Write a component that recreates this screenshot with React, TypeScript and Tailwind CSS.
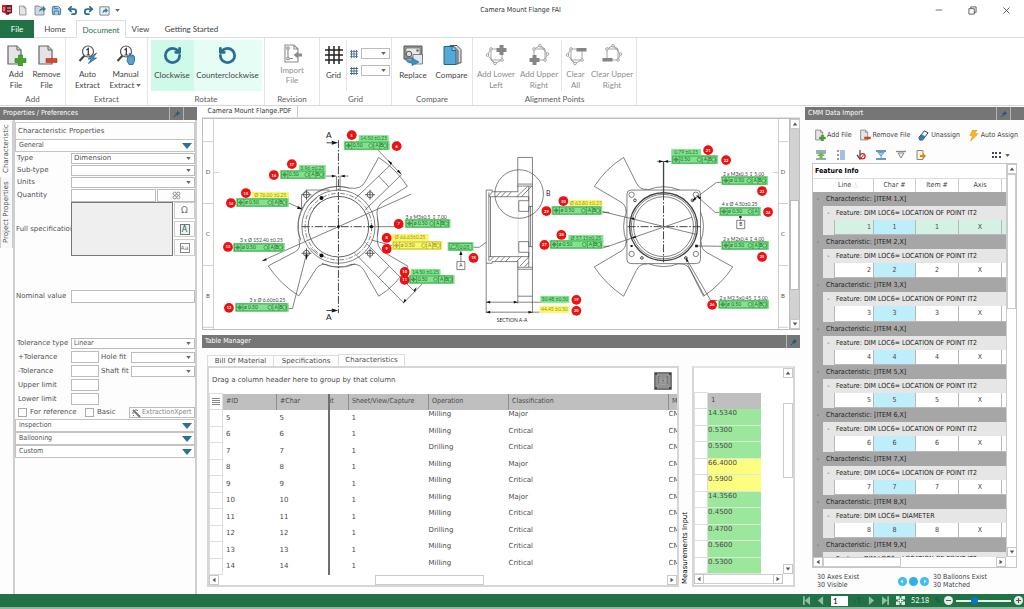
import React from 'react';
import { RotateCcw, RotateCw, Undo2, Redo2, Save, Minus, X, Plus } from 'lucide-react';

type Tone = 'green' | 'yellow' | 'none';

/* ---------- small shared pieces ---------- */

const Caret: React.FC<{ className?: string }> = ({ className = '' }) => (
  <svg viewBox="0 0 6 4" className={`w-[5px] h-[3px] ${className}`}>
    <path d="M0 0h6L3 4z" fill="#666" />
  </svg>
);

const Pin: React.FC = () => (
  <svg viewBox="0 0 10 10" className="w-2 h-2">
    <path d="M5.5 1 9 4.5 7 5 5.5 7.5 2.5 4.5 5 3z" fill="#1d5c84" />
    <path d="M4 6 1 9" stroke="#1d5c84" strokeWidth="1.2" />
  </svg>
);

const PanelHeader: React.FC<{ title: string; closable?: boolean }> = ({ title, closable = true }) => (
  <div className="flex h-[13px] shrink-0 items-stretch bg-[#767676] text-white">
    <h2 className="flex-1 truncate pl-[3px] font-[DejaVu_Sans_Condensed,sans-serif] text-[7px] leading-[13px]">{title}</h2>
    <button type="button" aria-label={`Pin ${title}`} className="flex w-[14px] items-center justify-center border-l border-[#b5b5b5]">
      <Pin />
    </button>
    {closable && <button type="button" aria-label={`Close ${title}`} className="w-[14px] border-l border-[#b5b5b5]" />}
  </div>
);

const ScrollArrow: React.FC<{ dir: 'up' | 'down' | 'left' | 'right' }> = ({ dir }) => {
  const paths = { up: 'M1 6 4 2l3 4z', down: 'M1 2h6L4 6z', left: 'M6 1v6L2 4z', right: 'M2 1v6l4-3z' };
  return (
    <button type="button" aria-label={`Scroll ${dir}`} className="flex h-[10px] w-[10px] shrink-0 items-center justify-center border border-[#c8c8c8] bg-white">
      <svg viewBox="0 0 8 8" className="h-[6px] w-[6px]">
        <path d={paths[dir]} fill="#555" />
      </svg>
    </button>
  );
};

const SelectBox: React.FC<{ id: string; label?: string; value?: string; className?: string }> = ({ id, label, value = '', className = '' }) => (
  <span className={`relative flex h-[11px] items-center border border-[#bcbcbc] bg-white ${className}`}>
    <select id={id} aria-label={label} defaultValue={value} className="h-full w-full appearance-none bg-transparent pl-[2px] leading-none outline-none">
      <option value={value}>{value}</option>
    </select>
    <Caret className="pointer-events-none absolute right-[3px]" />
  </span>
);

/* ---------- icons ---------- */

const Page: React.FC<{ children?: React.ReactNode; className?: string }> = ({ children, className = 'h-[22px] w-[22px]' }) => (
  <svg viewBox="0 0 22 22" className={className}>
    <path d="M3 2h9l4 4v14H3z" fill="#e4e4e4" stroke="#666" strokeWidth="1.2" />
    <path d="M12 2v4h4" fill="#cfcfcf" stroke="#666" />
    {children}
  </svg>
);

const AddFileIcon: React.FC<{ className?: string }> = ({ className }) => (
  <Page className={className}>
    <path d="M13.5 11h4v3.500H21v4h-3.500V22h-4v-3.500H10v-4h3.500z" fill="#43a52c" stroke="#2a7a1a" strokeWidth=".6" />
  </Page>
);

const RemoveFileIcon: React.FC<{ className?: string }> = ({ className }) => (
  <Page className={className}>
    <path d="M10 14.5h11v4H10z" fill="#d8482c" stroke="#b03018" strokeWidth=".6" />
  </Page>
);

const ExtractIcon: React.FC<{ manual?: boolean }> = ({ manual }) => (
  <svg viewBox="0 0 22 22" className="h-[22px] w-[22px]">
    <path d="M7.5 11.5 2.5 17" stroke="#444" strokeWidth="2" />
    <circle cx="11" cy="7.5" r="5.5" fill="#fff" stroke="#555" strokeWidth="1.2" />
    <path d="M9.5 6 11.3 4.5V11M9.5 11h3.6" fill="none" stroke="#333" strokeWidth="1.2" />
    {manual ? (
      <path d="M13 12h1.300V9.500h1.500V12h1.200v-1h1.300v1.500h1.200V17l-1.500 3.500h-4L12 17z" fill="#5b9fc6" stroke="#22648c" strokeWidth=".8" />
    ) : (
      <path d="m19.5 9-8.500 6h3.500l-3 4.500 8-5.500H16z" fill="#4a90bd" stroke="#22648c" strokeWidth=".8" />
    )}
  </svg>
);

const ImportIcon: React.FC = () => (
  <svg viewBox="0 0 22 22" className="h-[22px] w-[22px]" fill="none" stroke="#8c8c8c" strokeWidth="1.1">
    <path d="M4 3h9l4 4v13H4zM13 3v4h4" />
    <circle cx="7" cy="6" r="1.3" />
    <circle cx="7" cy="16.5" r="1.3" />
    <path d="M7 7.5V15M8.5 16.5H12" />
    <path d="M21 11.5h-4V9.500l-4.500 3.500 4.500 3.500v-2h4z" fill="#8c8c8c" stroke="none" />
  </svg>
);

const GridIcon: React.FC = () => (
  <svg viewBox="0 0 20 20" className="h-[20px] w-[20px]" stroke="#222" strokeWidth="1.5">
    <path d="M5 1v18M10 1v18M15 1v18M1 5h18M1 10h18M1 15h18" />
  </svg>
);

const SpacingIcon: React.FC<{ vertical?: boolean }> = ({ vertical }) => (
  <svg viewBox="0 0 8 8" className="h-[8px] w-[8px]">
    <path d="M1.5 0v8M4 0v8M6.5 0v8" stroke={vertical ? '#2f8fc4' : '#555'} strokeWidth=".9" />
    <path d="M0 1.500h8M0 4h8M0 6.500h8" stroke={vertical ? '#555' : '#2f8fc4'} strokeWidth=".9" />
  </svg>
);

const ReplaceIcon: React.FC = () => (
  <svg viewBox="0 0 22 22" className="h-[22px] w-[22px]">
    <path d="M2 2h18v13H2z" fill="#9a9a9a" stroke="#555" />
    <path d="M4 4h14v9H4z" fill="#e9e9e9" stroke="#666" strokeWidth=".7" />
    <circle cx="15.5" cy="6.5" r="1.2" fill="#666" />
    <circle cx="7" cy="10" r="2.8" fill="#ddd" stroke="#555" />
    <path d="M11 10.5h9.500v9.500H11z" fill="#dfe8ee" stroke="#666" strokeWidth=".8" />
    <path d="M3 14c2 2.500 4 3 7 2.500V14l7 4-7 3.500V19c-3 .5-6-1-7-5z" fill="#3d8fc0" stroke="#1f6a97" strokeWidth=".6" />
  </svg>
);

const CompareIcon: React.FC = () => (
  <svg viewBox="0 0 22 22" className="h-[22px] w-[22px]">
    <path d="M9 1.500h7l4 4V19H9z" fill="#ddd" stroke="#555" />
    <path d="M6 2.500h7l4 4V20H6z" fill="#bbb" stroke="#555" />
    <path d="M3 2.500h8l4 4v14H3z" fill="#54a9d6" stroke="#22648c" />
    <path d="M11 2.500v4h4" fill="#9cd0ea" stroke="#22648c" />
  </svg>
);

const AlignIcon: React.FC<{ mark: 'plus' | 'minus'; lower?: boolean }> = ({ mark, lower }) => (
  <svg viewBox="0 0 22 22" className="h-[22px] w-[22px]">
    <g fill="none" stroke="#9a9a9a" strokeWidth=".9">
      <path d="M6 5h11v11H6z" />
      <path d={lower ? 'M6 5 12 1.500 19.500 10 17 16M12 1.500 17 5' : 'M6 5 2.500 11 10 19.500 17 16M6 16l4 3.500'} />
      <circle cx="6" cy="5" r="1.3" fill="#fff" />
      <circle cx="17" cy="16" r="1.3" fill="#fff" />
      <circle cx={lower ? 12 : 2.5} cy={lower ? 1.8 : 11} r="1.3" fill="#fff" />
      <circle cx={lower ? 19.5 : 10} cy={lower ? 10 : 19.5} r="1.3" fill="#fff" />
    </g>
    <g transform={lower ? 'translate(-10 10)' : 'translate(0 0)'}>
      {mark === 'plus' ? <path d="M14.500 1h4v3h3v4h-3v3h-4V8h-3V4h3z" fill="#858585" /> : <path d="M11.500 4h10v3.500h-10z" fill="#858585" />}
    </g>
  </svg>
);

const Wand: React.FC = () => (
  <svg viewBox="0 0 10 10" className="h-[10px] w-[10px]" stroke="#777">
    <path d="m2 2 7 7" strokeWidth="2" />
    <path d="M5 1v2M1 5h2M7 2 6 3M2 8l1-1" strokeWidth="1" />
  </svg>
);

/* ---------- title bar and ribbon ---------- */

const TitleBar: React.FC = () => (
  <header className="flex h-5 items-center bg-white">
    <div className="flex flex-1 items-center gap-[5px] pl-[1px]">
      <svg viewBox="0 0 12 12" className="h-[12px] w-[12px]">
        <path d="M1 1h7v10L1 8z" fill="#c0202c" />
        <path d="M5 1h6v8l-6 2z" fill="#7c1620" />
        <path d="M2 4h2M2 6h2M6 4h4M6 7h4" stroke="#fff" strokeWidth=".8" />
      </svg>
      <button type="button" aria-label="New"><Page className="h-[11px] w-[11px]" /></button>
      <button type="button" aria-label="Open">
        <svg viewBox="0 0 12 12" className="h-[12px] w-[12px]">
          <path d="M1 2h4l1 1h4v8H1z" fill="#cfd8de" stroke="#6d7f8b" strokeWidth=".8" />
          <path d="M5 8c0-3 2-4 4-4V2l3 3-3 3V6C7 6 6 7 5 8z" fill="#3c7fa6" />
        </svg>
      </button>
      <button type="button" aria-label="Save"><Save className="h-[11px] w-[11px] fill-[#a9cfe4] text-[#3b6f8f]" strokeWidth={2} /></button>
      <button type="button" aria-label="Undo"><Undo2 className="h-[11px] w-[11px] text-[#2f6f98]" strokeWidth={4} /></button>
      <button type="button" aria-label="Redo"><Redo2 className="h-[11px] w-[11px] text-[#2f6f98]" strokeWidth={4} /></button>
      <button type="button" aria-label="Export">
        <svg viewBox="0 0 12 12" className="h-[11px] w-[11px]">
          <path d="M1 2h10v9H1z" fill="#eef2f4" stroke="#6d7f8b" />
          <path d="M4 9c0-3 1-4 3-4V3l3 3-3 3V7C6 7 5 8 4 9z" fill="#3c7fa6" />
        </svg>
      </button>
      <button type="button" aria-label="Customize toolbar"><Caret /></button>
    </div>
    <h1 className="pl-7 font-[DejaVu_Sans_Condensed,sans-serif] text-[7px] text-[#333]">Camera Mount Flange FAI</h1>
    <div className="flex flex-1 items-center justify-end gap-6 pr-3 text-[#555]">
      <button type="button" aria-label="Minimize"><Minus className="h-[10px] w-[10px]" strokeWidth={2} /></button>
      <button type="button" aria-label="Restore">
        <svg viewBox="0 0 10 10" className="h-[9px] w-[9px]" fill="none" stroke="#555"><path d="M1 3h6v6H1zM3 3V1h6v6H7" /></svg>
      </button>
      <button type="button" aria-label="Close"><X className="h-[11px] w-[11px]" strokeWidth={2} /></button>
    </div>
  </header>
);

const MenuTabs: React.FC = () => (
  <nav className="flex h-[18px] items-stretch border-b border-[#dcdfe2] bg-white text-[8px] text-[#444]">
    <button type="button" className="mb-[-1px] w-[34px] bg-[#217346] text-white">File</button>
    <button type="button" className="w-[42px]">Home</button>
    <button type="button" className="mb-[-1px] w-[50px] border-x border-t border-[#dcdfe2] bg-white text-[#217346]">Document</button>
    <button type="button" className="w-[29px]">View</button>
    <button type="button" className="ml-[6px] w-[61px]">Getting Started</button>
  </nav>
);

type RibbonButtonProps = {
  icon: React.ReactNode;
  lines: string[];
  className?: string;
  caret?: boolean;
  disabled?: boolean;
  tight?: boolean;
};

const RibbonButton: React.FC<RibbonButtonProps> = ({ icon, lines, className = '', caret, disabled, tight }) => (
  <button
    type="button"
    disabled={disabled}
    className={`flex h-[51px] flex-col items-center text-center ${tight ? 'pt-px leading-[10px]' : 'gap-[3px] pt-[3px] leading-[11px]'} ${disabled ? 'text-[#8d8d8d]' : 'text-[#444]'} ${className}`}
  >
    <span className="flex h-[24px] items-center justify-center">{icon}</span>
    <span>
      {lines.map((line, i) => (
        <span key={line} className="flex items-center justify-center gap-[2px] whitespace-nowrap">
          {line}
          {caret && i === lines.length - 1 && <Caret />}
        </span>
      ))}
    </span>
  </button>
);

const RibbonGroup: React.FC<{ label: string; className: string; children: React.ReactNode }> = ({ label, className, children }) => (
  <section className={`flex shrink-0 flex-col border-r border-[#e2e4e6] pt-[2px] ${className}`}>
    <div className="flex justify-center">{children}</div>
    <h3 className="mt-auto text-center leading-[11px] text-[#5c5c5c]">{label}</h3>
  </section>
);

const Ribbon: React.FC = () => (
  <div className="flex h-[68px] border-b border-[#d6d9dc] bg-white text-[8px]">
    <RibbonGroup label="Add" className="w-[66px]">
      <RibbonButton icon={<AddFileIcon />} lines={['Add', 'File']} className="w-[28px]" />
      <RibbonButton icon={<RemoveFileIcon />} lines={['Remove', 'File']} className="w-[33px]" />
    </RibbonGroup>
    <RibbonGroup label="Extract" className="w-[82px]">
      <RibbonButton icon={<ExtractIcon />} lines={['Auto', 'Extract']} className="w-[38px]" />
      <RibbonButton icon={<ExtractIcon manual />} lines={['Manual', 'Extract']} caret className="w-[38px]" />
    </RibbonGroup>
    <RibbonGroup label="Rotate" className="w-[117px]">
      <RibbonButton icon={<RotateCw className="h-[19px] w-[19px] text-[#2a6f97]" strokeWidth={3.5} />} lines={['Clockwise']} className="w-[43px] bg-[#cff9e8]" />
      <RibbonButton icon={<RotateCcw className="h-[19px] w-[19px] text-[#2a6f97]" strokeWidth={3.5} />} lines={['Counterclockwise']} className="w-[68px] bg-[#e6fdf5]" />
    </RibbonGroup>
    <RibbonGroup label="Revision" className="w-[55px]">
      <RibbonButton icon={<ImportIcon />} lines={['Import', 'File']} disabled tight className="w-[40px]" />
    </RibbonGroup>
    <RibbonGroup label="Grid" className="w-[72px]">
      <RibbonButton icon={<GridIcon />} lines={['Grid']} className="w-[26px] border-r border-[#e2e4e6]" />
      <div className="flex flex-col gap-[6px] pt-[8px] pl-[3px]">
        <div className="flex items-center gap-[3px]">
          <SpacingIcon />
          <SelectBox id="grid-rows" label="Grid rows" className="w-[29px]" />
        </div>
        <div className="flex items-center gap-[3px]">
          <SpacingIcon vertical />
          <SelectBox id="grid-columns" label="Grid columns" className="w-[29px]" />
        </div>
      </div>
    </RibbonGroup>
    <RibbonGroup label="Compare" className="w-[81px]">
      <RibbonButton icon={<ReplaceIcon />} lines={['Replace']} className="w-[39px]" />
      <RibbonButton icon={<CompareIcon />} lines={['Compare']} className="w-[38px]" />
    </RibbonGroup>
    <RibbonGroup label="Alignment Points" className="w-[164px]">
      <RibbonButton icon={<AlignIcon mark="plus" />} lines={['Add Lower', 'Left']} disabled className="w-[43px]" />
      <RibbonButton icon={<AlignIcon mark="plus" lower />} lines={['Add Upper', 'Right']} disabled className="w-[43px]" />
      <RibbonButton icon={<AlignIcon mark="minus" />} lines={['Clear', 'All']} disabled className="w-[29px] border-l border-[#e2e4e6]" />
      <RibbonButton icon={<AlignIcon mark="minus" lower />} lines={['Clear Upper', 'Right']} disabled className="w-[45px]" />
    </RibbonGroup>
  </div>
);

/* ---------- properties ---------- */

const Section: React.FC<{ title: string }> = ({ title }) => (
  <button type="button" className="flex h-[13px] w-full items-center justify-between border border-[#c4c4c4] bg-white pr-[2px] pl-[3px] font-[DejaVu_Sans_Condensed,sans-serif]">
    {title}
    <svg viewBox="0 0 10 6" className="h-[6px] w-[10px]">
      <path d="M0 0h10L5 6z" fill="#2a7196" />
    </svg>
  </button>
);

const FieldRow: React.FC<{ id: string; label: string; children: React.ReactNode }> = ({ id, label, children }) => (
  <div className="flex h-3 items-center">
    <label htmlFor={id} className="w-[56px] shrink-0 pl-[2px] whitespace-nowrap">{label}</label>
    {children}
  </div>
);

const textBox = 'border border-[#bcbcbc] bg-white outline-none';

const tolerances = [
  { left: '+Tolerance', right: 'Hole fit' },
  { left: '-Tolerance', right: 'Shaft fit' },
  { left: 'Upper limit', right: '' },
  { left: 'Lower limit', right: '' },
];

const PropertiesPanel: React.FC = () => (
  <aside className="flex w-[197px] shrink-0 flex-col pt-px">
    <PanelHeader title="Properties / Preferences" />
    <div className="flex min-h-0 flex-1 text-[7px] text-[#505050]">
      <div className="flex w-[13px] shrink-0 flex-col pt-px">
        <button type="button" className="h-[56px] rotate-180 border-l border-[#ccc] [writing-mode:vertical-rl]">Characteristic</button>
        <button type="button" className="h-[71px] rotate-180 border-y border-l border-[#ccc] bg-[#f8f8f8] [writing-mode:vertical-rl]">Project Properties</button>
      </div>
      <div className="min-w-0 flex-1 border-x-2 border-[#cfcfcf] pt-[2px]">
        <h3 className="h-[17px] border border-b-0 border-[#ccc] pl-[2px] leading-[17px]">Characteristic Properties</h3>
        <Section title="General" />
        <div className="flex flex-col">
          <FieldRow id="type" label="Type"><SelectBox id="type" value="Dimension" className="flex-1" /></FieldRow>
          <FieldRow id="subtype" label="Sub-type"><SelectBox id="subtype" className="flex-1" /></FieldRow>
          <FieldRow id="units" label="Units"><SelectBox id="units" className="flex-1" /></FieldRow>
          <div className="flex h-[14px] items-center">
            <label htmlFor="quantity" className="w-[56px] shrink-0 pl-[2px]">Quantity</label>
            <input id="quantity" className={`h-[13px] min-w-0 flex-1 ${textBox}`} />
            <button type="button" aria-label="Split quantity" className="ml-px flex h-[13px] w-[38px] items-center justify-center border border-[#bcbcbc]">
              <svg viewBox="0 0 10 10" className="h-[9px] w-[9px]" fill="none" stroke="#888">
                <circle cx="3" cy="3" r="1.8" />
                <circle cx="7" cy="3" r="1.8" />
                <circle cx="3" cy="7" r="1.8" />
                <circle cx="7" cy="7" r="1.8" />
              </svg>
            </button>
          </div>
          <div className="flex h-[54px]">
            <label htmlFor="spec" className="w-[56px] shrink-0 self-center overflow-hidden pl-px whitespace-nowrap">Full specification</label>
            <textarea id="spec" className="min-w-0 flex-1 resize-none border border-[#777] bg-[#efefef] outline-none" />
            <div className="ml-px flex w-[21px] flex-col gap-[2px] text-[#777]">
              <button type="button" className="flex-1 border border-[#ccc] text-[9px] leading-none">Ω</button>
              <button type="button" className="flex flex-1 items-center justify-center border border-[#ccc]">
                <span className="h-[11px] w-[10px] border border-[#777] bg-[#dff3ef] text-[8px] leading-[9px] text-[#456]">A</span>
              </button>
              <button type="button" className="flex flex-1 items-center justify-center border border-[#ccc]">
                <span className="h-[10px] w-[10px] border border-[#888] text-[6px] leading-[8px]">Aa</span>
              </button>
            </div>
          </div>
          <div className="mt-[34px] flex h-[13px] items-center">
            <label htmlFor="nominal" className="w-[56px] shrink-0 pl-px whitespace-nowrap">Nominal value</label>
            <input id="nominal" className={`h-[13px] min-w-0 flex-1 ${textBox}`} />
          </div>
          <div className="mt-[34px] flex h-[13px] items-center">
            <label htmlFor="toltype" className="w-[56px] shrink-0 pl-[2px] whitespace-nowrap">Tolerance type</label>
            <SelectBox id="toltype" value="Linear" className="flex-1 font-[DejaVu_Sans_Condensed,sans-serif]" />
          </div>
          {tolerances.map(({ left, right }) => (
            <div key={left} className="flex h-[14px] items-center">
              <label htmlFor={left} className="w-[56px] shrink-0 pl-[3px]">{left}</label>
              <input id={left} className={`h-[12px] w-[28px] ${textBox}`} />
              {right && (
                <>
                  <label htmlFor={right} className="w-[32px] shrink-0 pl-[2px] whitespace-nowrap">{right}</label>
                  <SelectBox id={right} className="flex-1" />
                </>
              )}
            </div>
          ))}
          <div className="flex h-[13px] items-center pl-[3px]">
            <input id="reference" type="checkbox" className="h-[9px] w-[9px] appearance-none border border-[#aaa] bg-white" />
            <label htmlFor="reference" className="w-[58px] pl-[3px] whitespace-nowrap">For reference</label>
            <input id="basic" type="checkbox" className="h-[9px] w-[9px] appearance-none border border-[#aaa] bg-white" />
            <label htmlFor="basic" className="pl-[3px]">Basic</label>
            <button type="button" className="ml-auto flex h-[11px] w-[66px] items-center gap-px border border-[#bbb] pl-px font-[DejaVu_Sans_Condensed,sans-serif] text-[#888]">
              <Wand />
              ExtractionXpert
            </button>
          </div>
        </div>
        <Section title="Inspection" />
        <Section title="Ballooning" />
        <Section title="Custom" />
      </div>
    </div>
  </aside>
);

/* ---------- drawing canvas ---------- */

const fills: Record<Tone, string> = { green: '#82e38c', yellow: '#f9f66a', none: 'none' };
const inks: Record<Tone, string> = { green: '#1b7a35', yellow: '#9a9430', none: '#444' };

type DimensionProps = { x: number; y: number; w: number; text: string; tone: Tone };

const Dimension: React.FC<DimensionProps> = ({ x, y, w, text, tone }) => (
  <g>
    <rect x={x} y={y} width={w} height="7" fill={fills[tone]} />
    <text x={x + w / 2} y={y + 5.3} textAnchor="middle" fontSize="5" fill={inks[tone]}>{text}</text>
  </g>
);

const Frame: React.FC<{ x: number; y: number; w: number; tone?: Tone; dia?: boolean; single?: boolean }> = ({ x, y, w, tone = 'green', dia = true, single }) => {
  const ink = tone === 'yellow' ? '#8a861c' : '#14682c';
  const end = x + w - 2;
  const cut = single ? end - 6 : end - 14;
  return (
    <g>
      <rect x={x} y={y} width={w} height="9" fill={fills[tone]} />
      <g stroke={ink} strokeWidth=".5" fill="none">
        <path d={`M${x + 1.5} ${y + 1}H${end}V${y + 8}H${x + 1.5}zM${x + 8} ${y + 1}v7M${cut} ${y + 1}v7`} />
        {!single && <path d={`M${cut + 6} ${y + 1}v7`} />}
        <circle cx={x + 4.8} cy={y + 4.5} r="1.6" />
        <path d={`M${x + 2.3} ${y + 4.5}h5M${x + 4.8} ${y + 2}v5`} />
        <circle cx={cut - 3} cy={y + 4.5} r="2" />
        {!single && <circle cx={end - 2.5} cy={y + 4.5} r="2" />}
      </g>
      <g fill={ink} fontSize="5">
        <text x={x + 9} y={y + 6.2}>{dia ? 'ø 0.50' : '0.50'}</text>
        <text x={cut + 1.5} y={y + 6.2}>A</text>
        {!single && <text x={cut + 6.3} y={y + 6.2}>B</text>}
      </g>
    </g>
  );
};

const dimensions: DimensionProps[] = [
  { x: 359, y: 135, w: 30, text: '14.50 ±0.25', tone: 'green' },
  { x: 299, y: 165, w: 27, text: '3.96 ±0.25', tone: 'green' },
  { x: 252, y: 192, w: 37, text: 'Ø 76.00 ±0.25', tone: 'yellow' },
  { x: 240, y: 237, w: 43, text: '3 x Ø 152.40 ±0.25', tone: 'none' },
  { x: 249, y: 297, w: 37, text: '3 x Ø 6.60±0.25', tone: 'none' },
  { x: 405, y: 214, w: 43, text: '3 x M3x0.5 ↧ 7.00', tone: 'none' },
  { x: 392, y: 234, w: 37, text: 'Ø 66.65±0.25', tone: 'yellow' },
  { x: 411, y: 269, w: 30, text: '14.50 ±0.25', tone: 'green' },
  { x: 541, y: 296, w: 29, text: '30.48 ±0.50', tone: 'green' },
  { x: 540, y: 306, w: 30, text: '44.45 ±0.50', tone: 'yellow' },
  { x: 570, y: 200, w: 33, text: 'Ø 63.80 ±0.25', tone: 'yellow' },
  { x: 569, y: 235, w: 35, text: 'Ø 57.15±0.25', tone: 'green' },
  { x: 672, y: 149, w: 30, text: '0.79 ±0.25', tone: 'green' },
  { x: 723, y: 171, w: 43, text: '2 x M3x0.5 ↧ 5.00', tone: 'none' },
  { x: 721, y: 201, w: 39, text: '4 x Ø 4.50±0.25', tone: 'none' },
  { x: 723, y: 236, w: 43, text: '2 x M2x0.4 ↧ 4.00', tone: 'none' },
  { x: 720, y: 295, w: 49, text: '2 x M2.5x0.45 ↧ 5.00', tone: 'none' },
];

// [number, x, y]
const balloons: [number, number, number][] = [
  [5, 352, 135], [6, 397, 146], [17, 292, 164], [16, 274, 175], [15, 246, 193], [14, 231, 203],
  [13, 228, 247], [12, 229, 308], [7, 399, 224], [8, 387, 238], [9, 387, 249], [10, 405, 272],
  [11, 405, 280], [18, 474, 258], [19, 577, 300], [20, 577, 311], [30, 564, 201], [29, 547, 211],
  [28, 562, 235], [27, 545, 245], [21, 709, 150], [22, 727, 160], [23, 763, 191], [24, 769, 212],
  [25, 763, 257], [26, 713, 305],
];

const FrontView: React.FC = () => (
  <g transform="translate(200 104) scale(.33333)" fill="none" stroke="#444" strokeWidth="2">
    <circle cx="416" cy="368" r="120" />
    <path d="M448 252q38 6 50-22l39-70q53 35 86 87l-70 44q-27 16-20 50M533 395q-4 36 20 50l72 42q-38 60-88 90l-42-74q-10-20-30-22H375q-20 0-30 20l-48 75q-58-37-92-90l82-43q18-9 10-37" fill="#fff" />
    <circle cx="416" cy="368" r="119" fill="#fff" stroke="none" />
    <path d="M302 410a120 120 0 0 1 146-158M533 341a120 120 0 0 1 0 54M466 480a120 120 0 0 1-100-2" />
    <circle cx="416" cy="368" r="110" />
    <circle cx="416" cy="368" r="100" strokeDasharray="14 5 4 5" />
    <circle cx="416" cy="368" r="91" strokeWidth="2.5" />
    <path d="M465 285 575 180M497 317 605 212M537 216l30 32M465 448l147 149M497 415l150 150M537 520l30-32M612 597l56-57" />
    <path d="M532 135l73 76" />
    <path d="M416 108v520" strokeDasharray="24 5 5 5" strokeWidth="3" />
    <path d="M306 368h222" strokeDasharray="24 5 5 5" strokeWidth="3" />
    <path d="M188 470 635 270M528 368h84M515 408l63 17M266 297l40 17M258 614h20l42-164M378 216h30M422 216h24M410 216v44M421 216v44" />
    <path d="M305 316v-42l15-16h70M330 300l22-20M340 315l20-20M332 432l22 20" />
    {[[320, 272], [511, 272], [320, 448], [511, 448]].map(([x, y]) => (
      <g key={`${x}-${y}`} strokeWidth="2.5">
        <circle cx={x} cy={y} r="9" />
        <path d={`M${x - 15} ${y}h30M${x} ${y - 15}v30`} />
      </g>
    ))}
    <g fill="#111" stroke="none">
      <circle cx="365" cy="282" r="6" />
      <circle cx="365" cy="455" r="6" />
      <circle cx="515" cy="368" r="5" />
      <circle cx="416" cy="368" r="4" />
      <path d="m396 110 19 6-19 6zM396 614l19 6-19 6zM294 306l14 10-16-1zM396 212l13 4-13 4zM435 212l-12 4 12 4zM564 168l14 9-5 5zM606 211l-14-9 5-5zM186 472l12-9 3 6zM610 599l5-14 5 5zM646 564l5-14-9 8zM317 452l3 18 4-18z" />
    </g>
    <path d="M380 116h20M380 620h20" strokeWidth="3" />
    <g fill="#222" stroke="none" fontSize="25">
      <text x="379" y="103">A</text>
      <text x="379" y="650">A</text>
    </g>
  </g>
);

const SectionView: React.FC = () => (
  <g transform="translate(430 104) scale(.33333)" fill="none" stroke="#444" strokeWidth="2">
    <path d="M265 160h44v417h-44zM265 240h44M265 246h44M265 490h44M265 496h44" />
    <path d="M265 248v240" stroke="#fff" strokeWidth="4" />
    <path d="M170 258h18v5h77v-17M170 258v220h18v-5h77v17M178 265v206M183 278v180M178 278h120v12M178 458h120v-13" />
    <path d="M298 290h-30v32h30zM298 413h-30v32h30zM298 246v44M298 445v45M298 322v-15h11M298 322v91M303 307v121M298 413v15h11" />
    <path d="m178 276 10-12M200 278l14-15M215 278l14-15M232 278l14-15M262 278l32-31M276 278l30-31M180 472l12-13M196 473l14-15M212 473l14-15M228 473l14-15M262 472l14-14M272 486l26-27M286 488l12-13" />
    <circle cx="269" cy="270" r="73" />
    <path d="M170 478v150M265 577v22M309 577v50M170 595h165M170 625h160M131 430h18l21-15M94 443v30M82 473h24v24H82zM520 325h20M522 427h18" />
    <path d="m170 595 12-4v8zM265 595l-12-4v8zM170 625l12-4v8zM309 625l-12-4v8zM94 441l-5 12h10z" fill="#111" stroke="none" />
    <g fill="#222" stroke="none">
      <text x="350" y="277" fontSize="21">B</text>
      <text x="94" y="490" fontSize="14" textAnchor="middle">A</text>
      <text x="248" y="656" fontSize="15" textAnchor="middle">SECTION A-A</text>
    </g>
  </g>
);

const RearView: React.FC = () => (
  <g transform="translate(590 104) scale(.33333)" fill="none" stroke="#444" strokeWidth="2">
    <circle cx="223" cy="368" r="120" />
    <path d="M175 256q-24 2-34-20l-38-76q-55 35-88 87l78 46q18 10 17 30M175 480q-24-2-34 20l-38 77q-55-37-88-88l78-46q18-10 17-30M270 480q24-2 34 20l39 77q55-37 88-88l-76-42q-20-10-19-34" />
    <rect x="113" y="258" width="221" height="221" rx="12" fill="#fff" />
    <circle cx="223" cy="368" r="102" strokeWidth="4" />
    <circle cx="223" cy="368" r="97" />
    <circle cx="223" cy="368" r="90" />
    <path d="M223 265v210M115 368h220" strokeDasharray="24 5 5 5" strokeWidth="3" />
    <path d="M223 172v95" strokeWidth="4" />
    <path d="M203 172h46M0 323h40l281 68M0 431h45l263-91M310 289l72-54h15M322 275l56 50h14M320 426l77 1M290 462l75 128h20M295 480l50 95" />
    {[[127, 272], [320, 272], [127, 450], [320, 450]].map(([x, y]) => <circle key={`${x}-${y}`} cx={x} cy={y} r="8" />)}
    {[[137, 289], [310, 289], [158, 462], [290, 462]].map(([x, y]) => <circle key={`${x}-${y}`} cx={x} cy={y} r="4" strokeWidth="3" />)}
    <path d="M223 172l-14-4v8zM223 172l14-4v8zM122 341l12 7 1-7zM124 403l14-7 2 6zM308 293l14-8-5-6zM322 273l14 8-6 5zM290 460l2 15 6-4zM318 422h8v8h-8zM124 423h6v6h-6z" fill="#111" stroke="none" />
    <path d="M454 333v16M443 349h24v25h-24z" />
    <path d="m454 331-5 10h10z" fill="#111" stroke="none" />
    <text x="455" y="367" fontSize="14" textAnchor="middle" fill="#222" stroke="none">B</text>
  </g>
);

const DrawingCanvas: React.FC = () => (
  <div className="flex h-[212px] shrink-0 border border-[#bdbdbd] bg-white">
    <svg viewBox="203 119 587 210" className="h-[210px] min-w-0 flex-1 font-[Lato,sans-serif]" role="img" aria-label="Camera mount flange drawing">
      <path d="M213.500 119v210M779.500 119v210M203 141.500h10M203 203.500h10M203 265.500h10M203 327.500h10M779 141.500h10M779 203.500h10M779 265.500h10M779 327.500h10M213 172.500h6M774 172.500h6" stroke="#cfcfcf" fill="none" />
      {['D', 'C', 'B'].map((letter, i) => (
        <g key={letter} fontSize="6" fill="#555" textAnchor="middle">
          <text x="208" y={174 + i * 62}>{letter}</text>
          <text x="784" y={174 + i * 62}>{letter}</text>
        </g>
      ))}
      <FrontView />
      <SectionView />
      <RearView />
      {dimensions.map((d) => <Dimension key={`${d.x}-${d.y}`} {...d} />)}
      <Frame x={344} y={141} w={46} dia={false} />
      <Frame x={280} y={170} w={46} dia={false} />
      <Frame x={236} y={198} w={53} />
      <Frame x={233} y={243} w={52} />
      <Frame x={235} y={303} w={54} />
      <Frame x={405} y={219} w={46} />
      <Frame x={392} y={241} w={51} tone="yellow" />
      <Frame x={409} y={275} w={46} dia={false} />
      <Frame x={552} y={206} w={51} />
      <Frame x={550} y={240} w={54} />
      <Frame x={672} y={155} w={47} dia={false} />
      <Frame x={722} y={176} w={47} />
      <Frame x={720} y={207} w={42} single />
      <Frame x={722} y={241} w={48} />
      <Frame x={719} y={300} w={51} />
      <g>
        <rect x="448" y="242" width="26" height="9" fill="#82e38c" />
        <path d="M449.500 243.500h23v6.500h-23zM458.500 243.500v6.500M451 248.500l1.500-3.500h5l-1.500 3.500z" fill="none" stroke="#14682c" strokeWidth=".5" />
        <text x="460" y="248.700" fontSize="5" fill="#14682c">0.05</text>
      </g>
      {balloons.map(([n, x, y]) => (
        <g key={n}>
          <circle cx={x} cy={y} r="4.9" fill="#ee1111" />
          <text x={x} y={y + 1.5} fontSize="4" fontWeight="bold" fill="#fff" textAnchor="middle">{n}</text>
        </g>
      ))}
    </svg>
    <div className="flex w-[10px] shrink-0 flex-col border-l border-[#bdbdbd] bg-[#d2d2d2]">
      <ScrollArrow dir="up" />
      <div className="flex-[72]" />
      <div className="flex-[90] border border-[#bbb] bg-white" />
      <div className="flex-[30]" />
      <ScrollArrow dir="down" />
    </div>
  </div>
);

/* ---------- table manager ---------- */

const characteristics = [
  { id: 5, operation: 'Milling', classification: 'Major', value: '14.5340', warn: false },
  { id: 6, operation: 'Milling', classification: 'Critical', value: '0.5300', warn: false },
  { id: 7, operation: 'Drilling', classification: 'Critical', value: '0.5500', warn: false },
  { id: 8, operation: 'Milling', classification: 'Major', value: '66.4000', warn: true },
  { id: 9, operation: 'Milling', classification: 'Critical', value: '0.5900', warn: true },
  { id: 10, operation: 'Milling', classification: 'Major', value: '14.3560', warn: false },
  { id: 11, operation: 'Milling', classification: 'Critical', value: '0.4500', warn: false },
  { id: 12, operation: 'Drilling', classification: 'Critical', value: '0.4700', warn: false },
  { id: 13, operation: 'Milling', classification: 'Critical', value: '0.5600', warn: false },
  { id: 14, operation: 'Milling', classification: 'Critical', value: '0.5300', warn: false },
];

const headCell = 'overflow-hidden border-r border-[#8e8e8e] bg-[#bfbfbf] pl-[3px] text-left font-normal whitespace-nowrap';

const CharacteristicsTable: React.FC = () => (
  <div className="flex min-w-0 flex-1 flex-col overflow-hidden border-2 border-[#d6d6d6] bg-white">
    <div className="flex h-[25px] items-center justify-between pr-[5px] pl-[3px]">
      <span>Drag a column header here to group by that column</span>
      <button type="button" aria-label="Show part">
        <svg viewBox="0 0 18 18" className="h-[18px] w-[18px]">
          <rect width="18" height="18" rx="1" fill="#777" />
          <path d="M3 3h12v12H3zM6 5h6v7H6zM7 7h4v3H7zM4 13h10" fill="none" stroke="#bbb" strokeWidth=".8" />
          <path d="M1 1h2v2H1zM15 1h2v2h-2zM1 15h2v2H1zM15 15h2v2h-2z" fill="#444" />
        </svg>
      </button>
    </div>
    <table className="w-full table-fixed border-collapse">
      <colgroup>
        <col className="w-[13px]" />
        <col className="w-[54px]" />
        <col className="w-[52px]" />
        <col className="w-[20px]" />
        <col className="w-[80px]" />
        <col className="w-[80px]" />
        <col className="w-[160px]" />
        <col />
      </colgroup>
      <thead>
        <tr className="h-[16px] font-[DejaVu_Sans_Condensed,sans-serif]">
          <th className="border border-[#ddd]">
            <svg viewBox="0 0 8 8" className="m-auto h-[8px] w-[8px]" stroke="#888"><path d="M0 .5h8M0 2.500h8M0 4.500h8M0 6.500h8" /></svg>
          </th>
          <th className={headCell}>#ID</th>
          <th className="overflow-hidden border-r-2 border-[#6d7072] bg-[#bfbfbf] pl-[3px] text-left font-normal">#Char</th>
          <th className="overflow-hidden border-r border-[#8e8e8e] bg-[#bfbfbf] text-left font-normal">it</th>
          <th className={headCell}>Sheet/View/Capture</th>
          <th className={headCell}>Operation</th>
          <th className={headCell}>Classification</th>
          <th className="overflow-hidden bg-[#bfbfbf] pl-[3px] text-left font-normal whitespace-nowrap">M</th>
        </tr>
      </thead>
      <tbody>
        {characteristics.map((row) => (
          <tr key={row.id} className="h-[17px] leading-[9px] even:h-4">
            <td className="border border-[#ddd]" />
            <td className="pl-[3px]">{row.id}</td>
            <td className="border-r-2 border-[#6d7072] pl-[3px]">{row.id}</td>
            <td />
            <td className="pl-[3px]">1</td>
            <td className="align-top">{row.operation}</td>
            <td className="align-top">{row.classification}</td>
            <td className="overflow-hidden align-top whitespace-nowrap">CM</td>
          </tr>
        ))}
      </tbody>
    </table>
    <div className="mt-auto flex h-[10px]">
      <ScrollArrow dir="left" />
      <div className="flex flex-1">
        <div className="flex-[157]" />
        <div className="flex-[107] border border-[#ccc] bg-white" />
        <div className="flex-[184]" />
      </div>
      <ScrollArrow dir="right" />
    </div>
  </div>
);

const MeasurementsTable: React.FC = () => (
  <div className="flex w-[103px] shrink-0 flex-col border-2 border-[#d6d6d6] border-t-[#e4e4e4] bg-white">
    <div className="flex h-[206px]">
      <div className="flex-1 overflow-hidden pt-[24px]">
        <table className="w-[67px] table-fixed border-collapse">
          <colgroup>
            <col className="w-[13px]" />
            <col />
          </colgroup>
          <thead>
            <tr className="h-[16px]">
              <th className="border border-[#ddd]" />
              <th className="bg-[#bfbfbf] pl-[3px] text-left font-normal">1</th>
            </tr>
          </thead>
          <tbody>
            {[...characteristics, { id: 15, value: '73.5500', warn: true }].map((row) => (
              <tr key={row.id} className="h-[17px] leading-[9px] even:h-4">
                <td className="border border-[#ddd]" />
                <td className={`border-b border-[#d9ead9] align-top ${row.warn ? 'bg-[#fdfd80]' : 'bg-[#9be79b]'}`}>{row.value}</td>
              </tr>
            ))}
          </tbody>
        </table>
      </div>
      <div className="flex w-[10px] flex-col">
        <ScrollArrow dir="up" />
        <div className="flex-[26]" />
        <div className="flex-[75] border border-[#ccc]" />
        <div className="flex-[89]" />
        <ScrollArrow dir="down" />
      </div>
    </div>
    <div className="flex h-[10px]">
      <ScrollArrow dir="left" />
      <div className="flex-1 border-y border-[#d0d0d0]" />
      <ScrollArrow dir="right" />
      <div className="w-[10px]" />
    </div>
  </div>
);

const TableManager: React.FC = () => (
  <section className="flex flex-col text-[7px] text-[#4a4a4a]">
    <PanelHeader title="Table Manager" closable={false} />
    <div className="flex h-[18px] items-end pl-[5px]" role="tablist">
      <button type="button" role="tab" className="h-[11px] w-[67px] border border-b-0 border-[#ddd]">Bill Of Material</button>
      <button type="button" role="tab" className="h-[11px] w-[64px] border-t border-[#ddd]">Specifications</button>
      <button type="button" role="tab" aria-selected="true" className="h-[12px] w-[67px] border border-b-0 border-[#ddd] bg-white">Characteristics</button>
    </div>
    <div className="flex h-[221px] px-[5px]">
      <CharacteristicsTable />
      <h3 className="w-[13px] shrink-0 rotate-180 pt-[3px] leading-[13px] text-black [writing-mode:vertical-rl]">Measurements Input</h3>
      <MeasurementsTable />
    </div>
  </section>
);

/* ---------- CMM import ---------- */

const features = Array.from({ length: 9 }, (_, i) => ({
  item: i + 1,
  feature: i === 7 ? 'DIM LOC6= DIAMETER' : 'DIM LOC6= LOCATION OF POINT IT2',
}));

const CmmTable: React.FC = () => (
  <div className="flex min-h-0 flex-1 flex-col border border-[#c6c6c6] bg-white">
    <div className="flex min-h-0 flex-1">
      <div className="min-w-0 flex-1 overflow-hidden">
        <h3 className="h-[15px] border-b border-[#ddd] pl-[2px] leading-[15px] font-bold text-black">Feature Info</h3>
        <table className="w-full table-fixed border-separate border-spacing-0">
          <colgroup>
            <col className="w-[10px]" />
            <col className="w-[11px]" />
            <col className="w-[40px]" />
            <col className="w-[42px]" />
            <col className="w-[43px]" />
            <col className="w-[43px]" />
            <col />
          </colgroup>
          <thead>
            <tr className="h-[13px] [&>th]:font-normal">
              <th />
              <th colSpan={2} className="border-r border-[#ccc]">Line <span className="text-[#ccc]">△</span></th>
              <th className="border-r border-[#ccc]">Char #</th>
              <th className="border-r border-[#ccc]">Item #</th>
              <th className="border-r border-[#ccc]">Axis</th>
              <th />
            </tr>
          </thead>
          <tbody>
            {features.map(({ item, feature }) => {
              const selected = item === 1;
              const cell = `border-r border-b border-[#b8b8b8] text-center ${selected ? 'bg-[#d5f1e3]' : 'bg-white'}`;
              return (
                <React.Fragment key={item}>
                  <tr className="h-[14px]">
                    <td className="bg-[#a6a6a6] text-center text-[#555]">-</td>
                    <td colSpan={6} className="bg-[#a6a6a6] pl-[3px] whitespace-nowrap text-[#222]">Characteristic: [ITEM {item},X]</td>
                  </tr>
                  <tr className="h-[14px]">
                    <td className="bg-[#a6a6a6]" />
                    <td className="bg-[#e6e6e6] text-center">-</td>
                    <td colSpan={5} className="bg-[#e6e6e6] pl-[2px] whitespace-nowrap text-[#222]">Feature: {feature}</td>
                  </tr>
                  {item < 9 && (
                    <tr className={item % 3 === 0 ? 'h-4' : 'h-[15px]'}>
                      <td className="bg-[#a6a6a6]" />
                      <td className="bg-[#e6e6e6]" />
                      <td className={`border-r border-b border-l border-[#b8b8b8] pr-[2px] text-right ${selected ? 'bg-[#d5f1e3]' : 'bg-white'}`}>{item}</td>
                      <td className="border-r border-b border-[#b8b8b8] bg-[#bfeefb] text-center">{item}</td>
                      <td className={cell}>{item}</td>
                      <td className={cell}>X</td>
                      <td className={selected ? 'border-b border-[#b8b8b8] bg-[#d5f1e3]' : 'border-b border-[#b8b8b8] bg-white'} />
                    </tr>
                  )}
                </React.Fragment>
              );
            })}
          </tbody>
        </table>
      </div>
      <div className="flex w-[10px] shrink-0 flex-col border-l border-[#ccc]">
        <ScrollArrow dir="up" />
        <div className="flex-[134] border border-[#ccc]" />
        <div className="flex-[240]" />
        <ScrollArrow dir="down" />
      </div>
    </div>
    <div className="flex h-[10px] shrink-0">
      <ScrollArrow dir="left" />
      <div className="flex-[77] border border-[#ccc]" />
      <div className="flex-[97]" />
      <ScrollArrow dir="right" />
      <div className="w-[10px]" />
    </div>
  </div>
);

const CmmToolbar: React.FC = () => (
  <>
    <div className="flex h-[30px] items-center justify-between pr-[6px] pl-[9px]">
      <button type="button" className="flex items-center gap-px whitespace-nowrap"><AddFileIcon className="h-[12px] w-[12px]" />Add File</button>
      <button type="button" className="flex items-center gap-px whitespace-nowrap"><RemoveFileIcon className="h-[12px] w-[12px]" />Remove File</button>
      <button type="button" className="flex items-center gap-[2px] whitespace-nowrap">
        <svg viewBox="0 0 12 12" className="h-[11px] w-[11px]">
          <path d="m1 8 6-7 4 2-6 8H2z" fill="#e9f4fa" stroke="#234" />
          <path d="m1 8 3-3.500L8 7l-3 4H2z" fill="#2f7fae" />
        </svg>
        Unassign
      </button>
      <button type="button" className="flex items-center gap-[2px] whitespace-nowrap">
        <svg viewBox="0 0 12 12" className="h-[11px] w-[11px]"><path d="M5 0h5L7 4h4L3 12l2-6H2z" fill="#fbb72a" stroke="#d98d10" strokeWidth=".6" /></svg>
        Auto Assign
      </button>
    </div>
    <div className="flex h-[10px] items-center pr-[14px] pl-[11px]">
      <div className="flex flex-1 items-center gap-[10px] [&_svg]:h-[10px] [&_svg]:w-[10px]">
        <button type="button" aria-label="Collapse all"><svg viewBox="0 0 10 10"><path d="M0 1h10M0 3h10M0 9h10" stroke="#6f93b0" strokeWidth="1.5" /><path d="m5 2 4 4H6.500v3h-3V6H1z" fill="#7cb83a" /></svg></button>
        <button type="button" aria-label="Outline"><svg viewBox="0 0 10 10"><path d="M1 1h2M1 5h2M1 9h2" stroke="#777" strokeWidth="1.5" /><path d="M4 1h5M4 3h5M4 5h5M4 7h5M4 9h5" stroke="#4f83c4" strokeWidth="1.2" /></svg></button>
        <button type="button" aria-label="Delete link"><svg viewBox="0 0 10 10"><path d="M4 0v6M1 5l3 4 3-2" stroke="#456" fill="none" strokeWidth="1.3" /><circle cx="6.5" cy="6.2" r="2.6" fill="#fff" stroke="#d22" strokeWidth="1.3" /><path d="m5 8 3-3.500" stroke="#d22" /></svg></button>
        <button type="button" aria-label="Filter axes"><svg viewBox="0 0 10 10"><path d="M0 1h10M0 9h10" stroke="#3977b5" strokeWidth="1.4" /><path d="M2 2.500h6L5 6zM5 5v3" fill="#a9cbe8" stroke="#6d9cc6" /></svg></button>
        <button type="button" aria-label="Filter"><svg viewBox="0 0 10 10"><path d="M0 1.500h10" stroke="#888" strokeWidth="1.3" /><path d="m2 3 3 5 3-5z" fill="#eee" stroke="#888" /></svg></button>
        <button type="button" aria-label="Export data"><svg viewBox="0 0 10 10"><path d="M1 .5h6v9H1z" fill="#fbf3d0" stroke="#888" /><path d="M4 5h3V3l3 3-3 3V7H4z" fill="#d08a1a" /></svg></button>
      </div>
      <button type="button" aria-label="Layout options" className="flex items-center gap-[3px]">
        <svg viewBox="0 0 10 8" className="h-[8px] w-[10px]"><path d="M0 1h2v2H0zM3 1h2v2H3zM0 5h2v2H0zM3 5h2v2H3zM7 1h2v2H7zM7 5h2v2H7z" fill="#445" /></svg>
        <Caret />
      </button>
    </div>
  </>
);

const CmmPanel: React.FC = () => (
  <aside className="flex w-[219px] shrink-0 flex-col pt-px font-[DejaVu_Sans_Condensed,sans-serif] text-[7px] text-[#444]">
    <PanelHeader title="CMM Data Import" />
    <CmmToolbar />
    <div className="flex min-h-0 flex-1 px-[7px] pt-[3px]">
      <CmmTable />
    </div>
    <div className="flex h-[26px] shrink-0 items-center pl-[12px] leading-[8px]">
      <p className="w-[81px]">30 Axes Exist<br />30 Visible</p>
      <svg viewBox="0 0 31 9" className="mr-[4px] h-[9px] w-[31px]">
        <circle cx="4.5" cy="4.5" r="4.5" fill="#3fbdf0" />
        <circle cx="15.5" cy="4.5" r="4.5" fill="#2fb0e8" />
        <circle cx="26.5" cy="4.5" r="4.5" fill="#3fbdf0" />
        <path d="M2.500 4.500 5 2.500v4zM28.500 4.500 26 2.500v4z" fill="#d9f3fd" />
      </svg>
      <p>30 Balloons Exist<br />30 Matched</p>
    </div>
  </aside>
);

/* ---------- status bar ---------- */

const NavIcon: React.FC<{ label: string; d: string }> = ({ label, d }) => (
  <button type="button" aria-label={label} className="w-[8px]">
    <svg viewBox="0 0 8 10" className="h-[9px] w-[7px]" fill="#8fbfa4"><path d={d} /></svg>
  </button>
);

const StatusBar: React.FC = () => (
  <footer className="flex h-[15px] shrink-0 items-center justify-end border-b-2 border-[#8fb8a3] bg-[#217346] pr-px text-[7px] text-white">
    <div className="flex items-center gap-[6px]">
      <NavIcon label="First page" d="M0 0h2v10H0zM8 0v10L2 5z" />
      <NavIcon label="Previous page" d="M7 0v10L1 5z" />
      <input aria-label="Page" defaultValue="1" className="h-[10px] w-[17px] bg-white pl-[2px] text-[8px] leading-none text-black outline-none" />
      <span className="w-[8px] text-[#18583a]">/1</span>
      <NavIcon label="Next page" d="M1 0v10l6-5z" />
      <NavIcon label="Last page" d="M6 0h2v10H6zM0 0v10l6-5z" />
      <button type="button" aria-label="Fit page">
        <svg viewBox="0 0 10 10" className="h-[9px] w-[9px]"><path d="M0 0h4v4H0zM6 0h4v4H6zM0 6h4v4H0zM6 6h4v4H6z" fill="#dcebe2" /><path d="M5 2v6M2 5h6" stroke="#fff" /></svg>
      </button>
      <span>52.18</span>
      <span className="w-[6px] text-[#18583a]">%</span>
    </div>
    <div className="ml-[3px] flex items-center gap-[3px]">
      <button type="button" aria-label="Zoom out" className="flex h-[9px] w-[9px] items-center justify-center rounded-full bg-[#e4eee8] text-[#555]"><Minus className="h-[7px] w-[7px]" strokeWidth={4} /></button>
      <input
        type="range"
        aria-label="Zoom"
        defaultValue={32}
        className="h-[2px] w-[55px] appearance-none bg-[#e8f1ec] [&::-webkit-slider-thumb]:h-[7px] [&::-webkit-slider-thumb]:w-[7px] [&::-webkit-slider-thumb]:appearance-none [&::-webkit-slider-thumb]:rounded-full [&::-webkit-slider-thumb]:bg-[#0078d7]"
      />
      <button type="button" aria-label="Zoom in" className="flex h-[9px] w-[9px] items-center justify-center rounded-full bg-[#e4eee8] text-[#555]"><Plus className="h-[7px] w-[7px]" strokeWidth={4} /></button>
    </div>
  </footer>
);

const App: React.FC = () => (
  <div className="flex h-screen flex-col overflow-hidden bg-white font-[Lato,sans-serif]">
    <TitleBar />
    <MenuTabs />
    <Ribbon />
    <main className="flex min-h-0 flex-1 bg-[#fdfdfd] font-[DejaVu_Sans,sans-serif]">
      <PropertiesPanel />
      <div className="flex min-w-0 flex-1 flex-col px-[5px]">
        <div className="flex h-3 shrink-0 border-b border-[#e2e2e2]">
          <button type="button" className="w-[96px] border-r border-[#c8c8c8] bg-white font-[DejaVu_Sans_Condensed,sans-serif] text-[7px] text-[#333]">Camera Mount Flange.PDF</button>
        </div>
        <DrawingCanvas />
        <div className="h-[5px] shrink-0" />
        <TableManager />
      </div>
      <CmmPanel />
    </main>
    <StatusBar />
  </div>
);

export default App;
